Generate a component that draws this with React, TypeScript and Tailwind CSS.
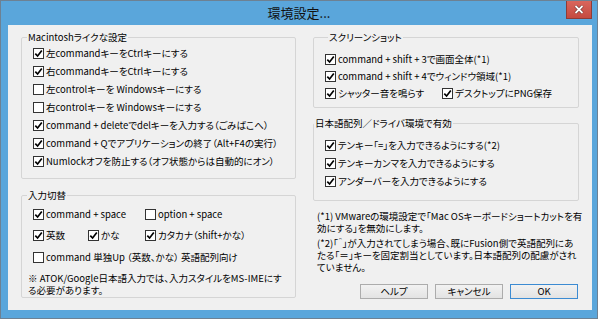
import type { ReactNode } from 'react'

function Box({ checked }: { checked: boolean }) {
  return (
    <span className="flex h-[11px] w-[11px] shrink-0 items-center justify-center border border-[#333333] bg-white">
      {checked && (
        <svg width="9" height="9" viewBox="0 0 9 9">
          <path d="M1.3 4.6 L3.6 7 L7.8 1.6" fill="none" stroke="#000" strokeWidth="1.7" />
        </svg>
      )}
    </span>
  )
}

function Check({ label, checked = true, className = '' }: { label: string; checked?: boolean; className?: string }) {
  return (
    <div className={`flex items-center gap-[2px] whitespace-nowrap ${className}`}>
      <Box checked={checked} />
      <span>{label}</span>
    </div>
  )
}

function Group({
  title,
  titleClass = '',
  className = '',
  children,
}: {
  title: string
  titleClass?: string
  className?: string
  children: ReactNode
}) {
  return (
    <fieldset className={`rounded-[2px] border border-[#d5d5d5] px-[11px] ${className}`}>
      <legend className={`px-[1px] leading-[14px] ${titleClass}`}>{title}</legend>
      {children}
    </fieldset>
  )
}

function Button({ label, primary = false }: { label: string; primary?: boolean }) {
  return (
    <button
      className={`flex h-[15px] w-[68px] items-center justify-center border bg-gradient-to-b from-[#f2f2f2] to-[#e3e3e3] leading-none ${
        primary ? 'border-[#3c8bd2]' : 'border-[#acacac]'
      }`}
    >
      {label}
    </button>
  )
}

export default function App() {
  return (
    <div className="h-[319px] w-[598px] border border-[#6d8193] bg-[#5aa6db] text-[9.5px] text-black font-['Noto_Sans_CJK_JP','Noto_Sans',sans-serif] [font-feature-settings:'palt']">
      <div className="relative flex h-[24px] items-center justify-center">
        <span className="text-[13px] text-[#111]">環境設定...</span>
        <div className="absolute right-[5px] top-0 flex h-[18px] w-[26px] items-center justify-center border border-[#8e3c37] border-t-0 bg-gradient-to-b from-[#d9665c] to-[#c44a40]">
          <svg width="10" height="9" viewBox="0 0 10 9">
            <path d="M1.5 1 L8.5 8 M8.5 1 L1.5 8" stroke="#5a2420" strokeWidth="3" />
            <path d="M1.5 1 L8.5 8 M8.5 1 L1.5 8" stroke="#fff" strokeWidth="1.8" />
          </svg>
        </div>
      </div>

      <div className="ml-[7px] mr-[5px] flex h-[285px] gap-[17px] bg-[#f0f0f0] px-[13px] pt-[5px]">
        <div className="flex w-[275px] flex-col">
          <Group title="Macintoshライクな設定" titleClass="-ml-[6px]" className="pb-[8px]">
            <Check className="h-[18px]" label="左commandキーをCtrlキーにする" />
            <Check className="h-[18px]" label="右commandキーをCtrlキーにする" />
            <Check className="h-[18px]" checked={false} label="左controlキーを Windowsキーにする" />
            <Check className="h-[18px]" checked={false} label="右controlキーを Windowsキーにする" />
            <Check className="h-[18px]" label="command + deleteでdelキーを入力する（ごみばこへ）" />
            <Check className="h-[18px]" label="command + Qでアプリケーションの終了（Alt+F4の実行）" />
            <Check className="h-[18px]" label="Numlockオフを防止する（オフ状態からは自動的にオン）" />
          </Group>

          <Group title="入力切替" titleClass="-ml-[6px]" className="mt-[9px] pb-[1px] pt-[3px]">
            <div className="flex h-[18px] items-center">
              <Check className="w-[112px]" label="command + space" />
              <Check checked={false} label="option + space" />
            </div>
            <div className="mt-[3px] flex h-[18px] items-center">
              <Check className="w-[55px]" label="英数" />
              <Check className="w-[57px]" label="かな" />
              <Check label="カタカナ（shift+かな）" />
            </div>
            <Check className="mt-[4px] h-[18px]" checked={false} label="command 単独Up （英数、かな） 英語配列向け" />
            <p className="-ml-[5px] mt-[6px] whitespace-nowrap leading-[12px]">
              ※ ATOK/Google日本語入力では、入力スタイルをMS-IMEにす
              <br />
              る必要があります。
            </p>
          </Group>
        </div>

        <div className="flex w-[266px] flex-col">
          <Group title="スクリーンショット" titleClass="ml-[3px]" className="pb-[5px] pt-[6px]">
            <Check className="h-[18px]" label="command + shift + 3で画面全体(*1)" />
            <Check className="h-[17px]" label="command + shift + 4でウィンドウ領域(*1)" />
            <div className="flex h-[17px] items-center">
              <Check className="w-[117px]" label="シャッター音を鳴らす" />
              <Check label="デスクトップにPNG保存" />
            </div>
          </Group>

          <Group title="日本語配列／ドライバ環境で有効" titleClass="-ml-[11px]" className="mt-[8px] pb-[10px] pt-[6px]">
            <Check className="h-[18px]" label="テンキー「=」を入力できるようにする(*2)" />
            <Check className="h-[18px]" label="テンキーカンマを入力できるようにする" />
            <Check className="h-[18px]" label="アンダーバーを入力できるようにする" />
          </Group>

          <div className="mt-[9px] whitespace-nowrap pl-[4px] leading-[12px]">
            <p>
              (*1) VMwareの環境設定で「Mac OSキーボードショートカットを有
              <br />
              効にする」を無効にします。
            </p>
            <p className="mt-[3px]">
              (*2)「＾」が入力されてしまう場合、既にFusion側で英語配列にあ
              <br />
              たる「＝」キーを固定割当としています。日本語配列の配慮がされ
              <br />
              ていません。
            </p>
          </div>

          <div className="mt-[11px] flex justify-end gap-[7px] pr-[1px]">
            <Button label="ヘルプ" />
            <Button label="キャンセル" />
            <Button label="OK" primary />
          </div>
        </div>
      </div>
    </div>
  )
}
